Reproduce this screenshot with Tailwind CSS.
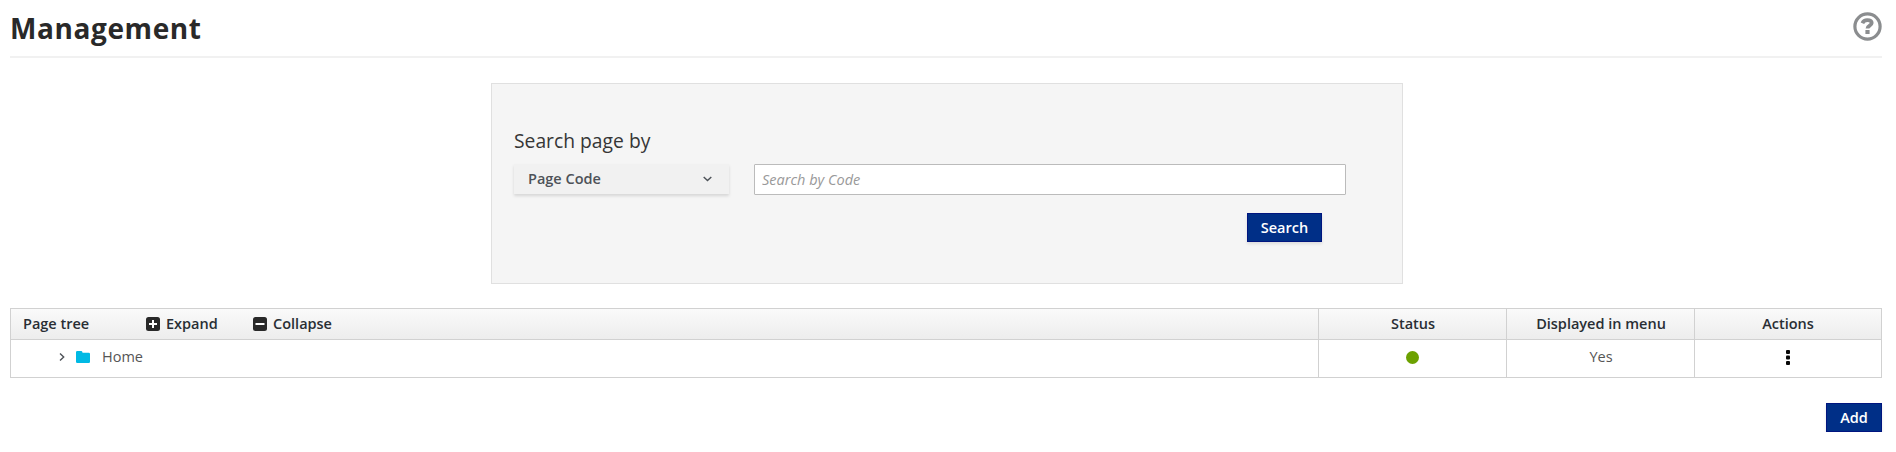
<!DOCTYPE html>
<html lang="en">
<head>
<meta charset="utf-8">
<title>Management</title>
<script src="https://cdn.jsdelivr.net/npm/@tailwindcss/browser@4"></script>
</head>
<body class="bg-white px-[10px] pr-[14px] font-['Open_Sans',sans-serif] text-[14.5px] text-[#363636]">
<header class="flex h-[58px] items-start justify-between border-b-2 border-[#f1f1f1]">
  <h1 class="mt-[9px] text-[28px] leading-[38px] font-bold tracking-[0.6px] text-[#292929]">Management</h1>
  <svg class="mt-3 h-[29px] w-[29px]" viewBox="0 0 29 29" fill="none" stroke="#8b8d8f"><circle cx="14.5" cy="14.5" r="12.6" stroke-width="3.2"/><path d="M9.400 11.200c1-2.200 2.600-3 4.800-3 2.700 0 4.500 1 4.500 2.900 0 2.600-4.200 2.400-4.200 5.300" stroke-width="3.800"/><path d="M12.400 20h4.200" stroke-width="4"/></svg>
</header>
<section class="mt-[25px] ml-[481px] h-[201px] w-[912px] border border-[#e0e0e0] bg-[#f5f5f5] pt-[43px] pl-[22px]">
  <h2 class="text-[19.3px] leading-7">Search page by</h2>
  <div class="mt-[9px] flex">
    <button class="flex h-[30px] w-[215px] items-center justify-between bg-[#f1f1f1] pr-[17px] pl-[14px] font-semibold text-[#4d5258] shadow-[0_2px_3px_rgba(3,3,3,0.13)]">Page Code<svg class="h-[6px] w-[9px]" viewBox="0 0 9 6" fill="none" stroke="#4d5258" stroke-width="1.400"><path d="M.7.9l3.800 3.700L8.300.9"/></svg></button>
    <input class="ml-[25px] h-[31px] w-[592px] rounded-[1px] border border-[#bbb] bg-white px-[7px] placeholder:text-[#999] placeholder:italic" placeholder="Search by Code">
  </div>
  <button class="mt-[18px] ml-[733px] h-[29px] w-[75px] border border-[#00157f] bg-[#002f87] leading-[25px] font-semibold text-white shadow-[0_2px_3px_rgba(3,3,3,0.1)]">Search</button>
</section>
<section class="mt-6 grid grid-cols-[1308px_188px_188px_187px] grid-rows-[31px_38px] border-t border-l border-[#d1d1d1] text-center">
  <div class="flex items-center border-r border-b border-[#d1d1d1] bg-linear-to-b from-[#fafafa] to-[#ededed] pl-3 font-semibold text-[#292e34]">
    <span class="w-[123px] text-left">Page tree</span>
    <span class="flex w-[107px] items-center gap-[6px]"><svg class="h-[14px] w-[14px]" viewBox="0 0 14 14"><rect width="14" height="14" rx="2.500" fill="#292929"/><path d="M3 7h8M7 3v8" stroke="#fff" stroke-width="2"/></svg>Expand</span>
    <span class="flex items-center gap-[6px]"><svg class="h-[14px] w-[14px]" viewBox="0 0 14 14"><rect width="14" height="14" rx="2.500" fill="#292929"/><path d="M2.500 7h9" stroke="#fff" stroke-width="2"/></svg>Collapse</span>
  </div>
  <div class="border-r border-b border-[#d1d1d1] bg-linear-to-b from-[#fafafa] to-[#ededed] pl-px leading-[30px] font-semibold text-[#292e34]">Status</div>
  <div class="border-r border-b border-[#d1d1d1] bg-linear-to-b from-[#fafafa] to-[#ededed] pl-px leading-[30px] font-semibold text-[#292e34]">Displayed in menu</div>
  <div class="border-r border-b border-[#d1d1d1] bg-linear-to-b from-[#fafafa] to-[#ededed] leading-[30px] font-semibold text-[#292e34]">Actions</div>
  <div class="flex items-center border-r border-b border-[#d1d1d1] pb-[3px] pl-[48px] text-[#555]">
    <svg class="h-2 w-[6px]" viewBox="0 0 6 8" fill="none" stroke="#4d5258" stroke-width="1.400"><path d="M1 .5L4.700 4 1 7.500"/></svg>
    <svg class="ml-[11px] h-3 w-[14px]" viewBox="0 0 14 12" fill="#00b9e4"><path d="M1.200 0h4.200q.9 0 1.200 1.700h6.200Q14 1.700 14 3v7.700Q14 12 12.800 12H1.200Q0 12 0 10.700V1.300Q0 0 1.200 0z"/></svg>
    <span class="ml-3">Home</span>
  </div>
  <div class="flex items-center justify-center border-r border-b border-[#d1d1d1] pb-[3px]"><span class="h-[13px] w-[13px] rounded-full bg-[#6ca100]"></span></div>
  <div class="border-r border-b border-[#d1d1d1] pl-px leading-[34px] text-[#555]">Yes</div>
  <div class="flex items-center justify-center border-r border-b border-[#d1d1d1] pr-px pb-[3px]"><svg class="h-[15px] w-1" viewBox="0 0 4 15" fill="#080808"><rect width="4" height="4" rx="1"/><rect y="5.500" width="4" height="4" rx="1"/><rect y="11" width="4" height="4" rx="1"/></svg></div>
</section>
<div class="flex justify-end pt-[25px]"><button class="h-[29px] w-[56px] border border-[#00157f] bg-[#002f87] leading-[25px] font-semibold text-white shadow-[0_2px_3px_rgba(3,3,3,0.1)]">Add</button></div>
</body>
</html>
